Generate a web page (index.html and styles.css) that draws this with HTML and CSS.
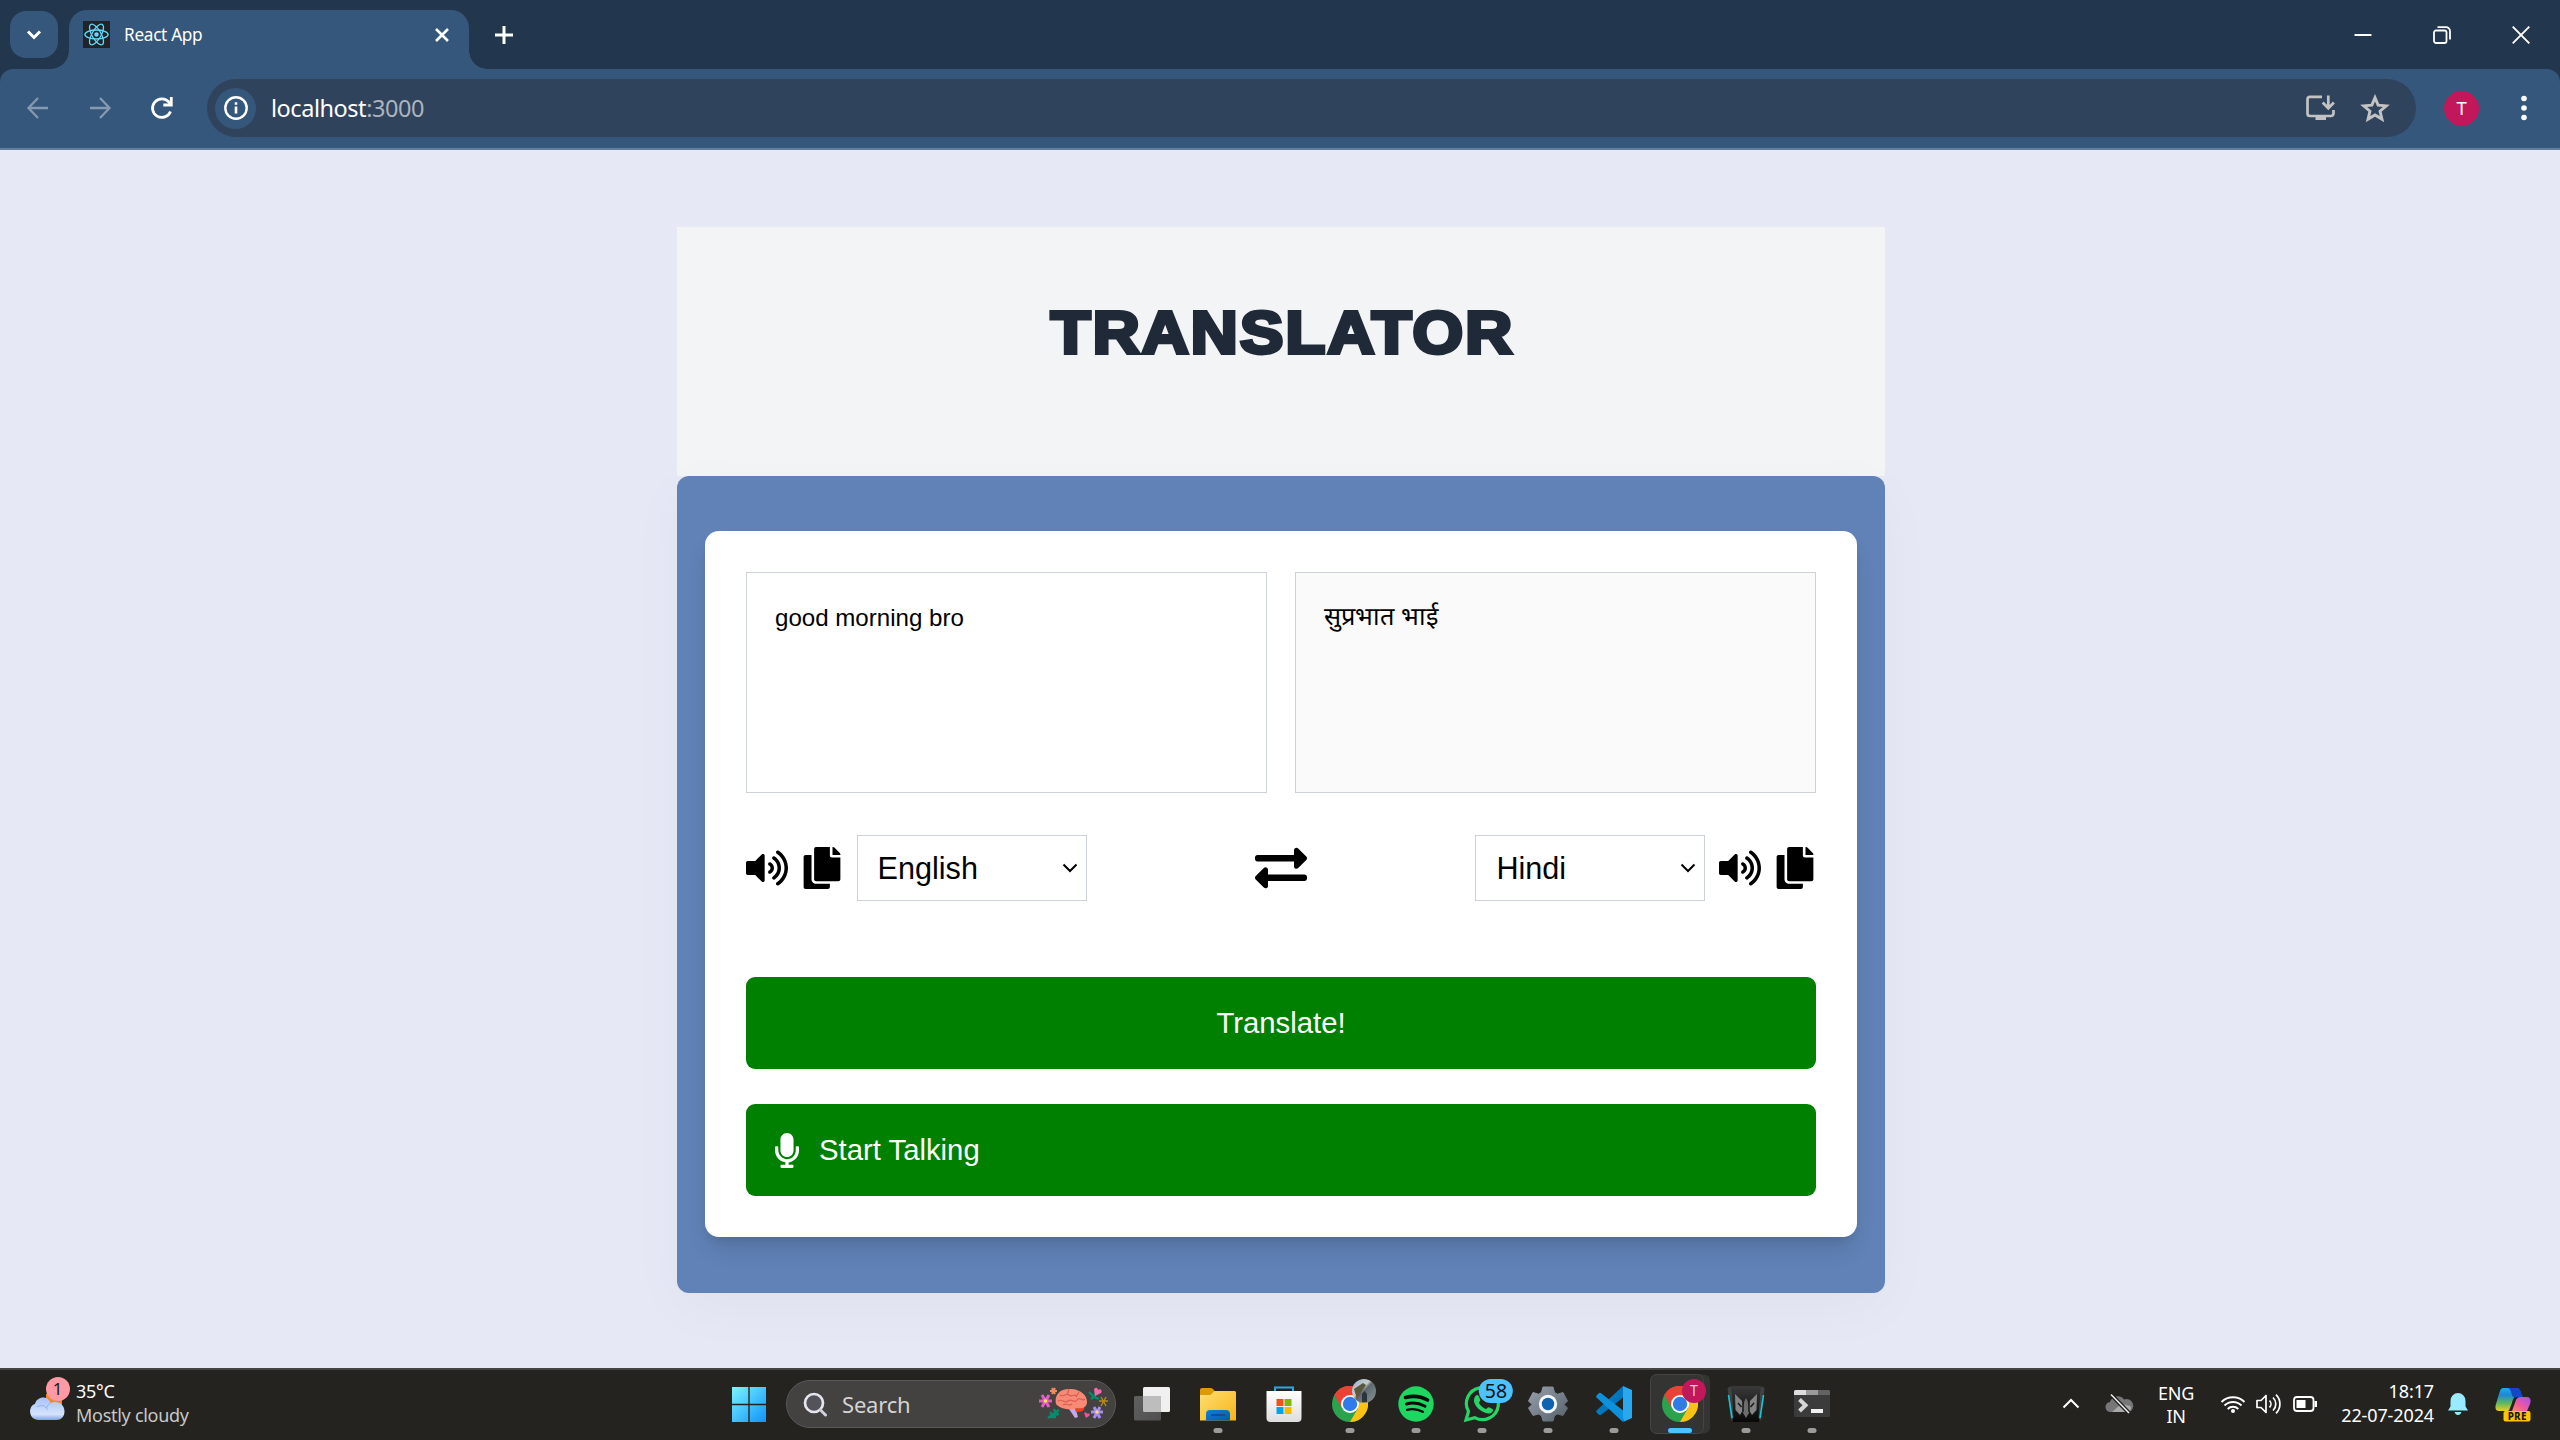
FILE: index.html
```html
<!DOCTYPE html>
<html lang="en">
<head>
<meta charset="utf-8">
<title>React App</title>
<link rel="stylesheet" href="styles.css">
</head>
<body>
<svg class="defs" width="0" height="0">
  <defs>
    <linearGradient id="gWin" x1="0" y1="0" x2="1" y2="1"><stop offset="0" stop-color="#7df3ff"/><stop offset="1" stop-color="#0d93fb"/></linearGradient>
    <linearGradient id="gViewB" x1="0" y1="0" x2="1" y2="1"><stop offset="0" stop-color="#606060"/><stop offset="1" stop-color="#505050"/></linearGradient>
    <linearGradient id="gFold" x1="0" y1="0" x2="1" y2="1"><stop offset="0" stop-color="#ffdf71"/><stop offset="1" stop-color="#f6b31a"/></linearGradient>
    <linearGradient id="gBlue" x1="0" y1="0" x2="1" y2="1"><stop offset="0" stop-color="#1280d4"/><stop offset="1" stop-color="#0a58a8"/></linearGradient>
    <linearGradient id="gBag" x1="0" y1="0" x2="0" y2="1"><stop offset="0" stop-color="#ffffff"/><stop offset="1" stop-color="#dedede"/></linearGradient>
    <linearGradient id="gGear" x1="0" y1="0" x2="1" y2="1"><stop offset="0" stop-color="#99a1aa"/><stop offset="1" stop-color="#56616d"/></linearGradient>
    <linearGradient id="gCloud" x1="0" y1="0" x2="0" y2="1"><stop offset="0" stop-color="#a6c2fb"/><stop offset=".75" stop-color="#d6e3fb"/><stop offset="1" stop-color="#7fa4ec"/></linearGradient>
    <linearGradient id="gCopA" x1="0" y1="0" x2="0" y2="1"><stop offset="0" stop-color="#18b0ec"/><stop offset=".3" stop-color="#1f86d8"/><stop offset=".65" stop-color="#5cb860"/><stop offset="1" stop-color="#f2cd1e"/></linearGradient>
    <linearGradient id="gCopB" x1="1" y1="0" x2="0" y2="1"><stop offset="0" stop-color="#a44df2"/><stop offset=".6" stop-color="#ee5c9c"/><stop offset="1" stop-color="#ff8a5c"/></linearGradient>
    <linearGradient id="gPhoto" x1="0" y1="0" x2="1" y2="1"><stop offset="0" stop-color="#8fb0d0"/><stop offset=".4" stop-color="#c9cdc8"/><stop offset=".5" stop-color="#5d6a70"/><stop offset="1" stop-color="#8b9692"/></linearGradient>
    <linearGradient id="gBlack" x1="0" y1="0" x2="0" y2="1"><stop offset="0" stop-color="#393939"/><stop offset="1" stop-color="#080808"/></linearGradient>
    <symbol id="volume" viewBox="0 0 576 512"><path d="M215.03 71.05L126.06 160H24c-13.26 0-24 10.74-24 24v144c0 13.25 10.74 24 24 24h102.06l88.97 88.95c15.03 15.03 40.97 4.47 40.97-16.97V88.02c0-21.46-25.96-31.98-40.97-16.97zm233.32-51.08c-11.17-7.33-26.18-4.24-33.51 6.95-7.34 11.17-4.22 26.18 6.95 33.51 66.27 43.49 105.82 116.6 105.82 195.58 0 78.98-39.55 152.09-105.82 195.58-11.17 7.32-14.29 22.34-6.95 33.5 7.04 10.71 21.93 14.56 33.51 6.95C528.27 439.58 576 351.33 576 256S528.27 72.43 448.35 19.97zM480 256c0-63.53-32.06-121.94-85.77-156.24-11.19-7.14-26.03-3.82-33.12 7.46s-3.78 26.21 7.41 33.36C408.27 165.97 432 209.11 432 256s-23.73 90.02-63.48 115.42c-11.19 7.14-14.5 22.07-7.41 33.36 6.51 10.36 21.12 15.14 33.12 7.46C447.94 377.94 480 319.54 480 256zm-141.77-76.87c-11.58-6.33-26.19-2.16-32.61 9.45-6.39 11.61-2.16 26.2 9.45 32.61C327.98 228.28 336 241.63 336 256c0 14.38-8.02 27.72-20.92 34.81-11.61 6.41-15.84 21-9.45 32.61 6.43 11.66 21.05 15.8 32.61 9.45 28.23-15.55 45.77-45 45.77-76.88s-17.54-61.32-45.78-76.86z"/></symbol>
    <symbol id="copy" viewBox="0 0 448 512"><path d="M320 448v40c0 13.255-10.745 24-24 24H24c-13.255 0-24-10.745-24-24V120c0-13.255 10.745-24 24-24h72v296c0 30.879 25.121 56 56 56h168zm0-344V0H152c-13.255 0-24 10.745-24 24v368c0 13.255 10.745 24 24 24h272c13.255 0 24-10.745 24-24V128H344c-13.2 0-24-10.8-24-24zm120.971-31.029L375.029 7.029A24 24 0 0 0 358.059 0H352v96h96v-6.059a24 24 0 0 0-7.029-16.97z"/></symbol>
    <symbol id="chrome" viewBox="0 0 36 36">
      <circle cx="18" cy="18" r="18" fill="#2ba24c"/>
      <path d="M2.4 9A18 18 0 0 1 33.6 9H18z" fill="#ea4335"/>
      <path d="M2.4 9A18 18 0 0 1 18 0V9L10.2 22.5z" fill="#ea4335"/>
      <path d="M33.6 9A18 18 0 0 1 18 36L25.8 22.5 18 9z" fill="#fbc116"/>
      <circle cx="18" cy="18" r="9" fill="#fff"/><circle cx="18" cy="18" r="7.2" fill="#2f7bea"/>
    </symbol>
  </defs>
</svg>

<div class="screen">
  <header class="tabstrip">
    <div class="tab-search"><svg width="16" height="12" viewBox="0 0 16 12"><path d="M2 2.5l6 6 6-6" fill="none" stroke="#fff" stroke-width="3"/></svg></div>
    <div class="tab">
      <svg class="favicon" viewBox="0 0 27 27"><rect width="27" height="27" fill="#20232a"/><g fill="none" stroke="#61dafb" stroke-width="1.3"><ellipse cx="13.5" cy="13.5" rx="11.6" ry="4.5"/><ellipse cx="13.5" cy="13.5" rx="11.6" ry="4.5" transform="rotate(60 13.5 13.5)"/><ellipse cx="13.5" cy="13.5" rx="11.6" ry="4.5" transform="rotate(120 13.5 13.5)"/></g><circle cx="13.5" cy="13.5" r="2.2" fill="#61dafb"/></svg>
      <span class="tab-title">React App</span>
      <svg class="tab-close" width="14" height="14" viewBox="0 0 14 14"><path d="M1 1l12 12M13 1L1 13" stroke="#fff" stroke-width="2.6"/></svg>
    </div>
    <svg class="new-tab" width="18" height="18" viewBox="0 0 18 18"><path d="M9 0v18M0 9h18" stroke="#fff" stroke-width="3"/></svg>
    <div class="window-buttons">
      <svg width="18" height="18" viewBox="0 0 18 18"><path d="M0.5 9h17" stroke="#fff" stroke-width="2"/></svg>
      <svg width="18" height="18" viewBox="0 0 18 18" fill="none" stroke="#fff" stroke-width="1.8"><rect x="1" y="4.5" width="12.5" height="12.5" rx="2"/><path d="M4.5 1.2H13a4 4 0 0 1 4 4v8.2"/></svg>
      <svg width="18" height="18" viewBox="0 0 18 18"><path d="M.7.7l16.6 16.6M17.3.7L.7 17.3" stroke="#fff" stroke-width="1.9"/></svg>
    </div>
  </header>

  <div class="toolbar">
    <svg class="nav-icon dim" viewBox="0 0 24 24"><path d="M22 12H3M12 2L2.500 12 12 22"/></svg>
    <svg class="nav-icon dim" viewBox="0 0 24 24"><path d="M2 12h19M12 2l9.500 10L12 22"/></svg>
    <svg class="nav-icon reload" viewBox="0 0 24 24"><path d="M20.500 15.500A9.300 9.300 0 1 1 19 6.200L21 8.600M21.300 1v8h-8"/></svg>
    <div class="omnibox">
      <span class="site-info"><svg width="26" height="26" viewBox="0 0 26 26"><circle cx="13" cy="13" r="10.700" fill="none" stroke="#fff" stroke-width="2.400"/><path d="M13 11.500v7M13 7.200v2.500" stroke="#fff" stroke-width="2.600"/></svg></span>
      <span class="url">localhost<span class="port">:3000</span></span>
      <svg class="install" width="30" height="28" viewBox="0 0 30 28" fill="none" stroke="#c3c3c3" stroke-width="2.700"><path d="M17 2.800H5a2.500 2.500 0 0 0-2.500 2.500v14.200A2.500 2.500 0 0 0 5 22h21a2.500 2.500 0 0 0 2.500-2.500V16M23.300 1.500V13M17.700 8.500l5.600 5.700 5.600-5.700"/><path d="M10.500 22h10.500v4H10.500z" fill="#c3c3c3" stroke="none"/></svg>
      <svg class="star" width="30" height="29" viewBox="0 0 28 27"><path d="M14 3.400l2.900 7 7.600.6-5.800 5 1.800 7.400-6.500-3.900-6.500 3.900 1.800-7.400-5.800-5 7.600-.6z" fill="none" stroke="#c3c3c3" stroke-width="2.700"/></svg>
    </div>
    <span class="avatar">T</span>
    <svg class="menu-dots" width="6" height="26" viewBox="0 0 6 26" fill="#fff"><circle cx="3" cy="3.500" r="2.800"/><circle cx="3" cy="13" r="2.800"/><circle cx="3" cy="22.500" r="2.800"/></svg>
  </div>

  <main class="page">
    <div class="banner"><h1 class="title">TRANSLATOR</h1></div>
    <section class="panel">
      <div class="card">
        <div class="texts">
          <textarea class="text" spellcheck="false">good morning bro</textarea>
          <textarea class="text result" lang="hi" readonly>सुप्रभात भाई</textarea>
        </div>
        <div class="controls">
          <div class="group">
            <svg class="icon"><use href="#volume"/></svg>
            <svg class="icon"><use href="#copy"/></svg>
            <div class="select">English<svg width="16" height="10" viewBox="0 0 16 10"><path d="M1.500 1.500L8 8l6.500-6.500" fill="none" stroke="#000" stroke-width="2"/></svg></div>
          </div>
          <svg class="swap" viewBox="0 0 512 512"><path d="M0 168v-16c0-13.255 10.745-24 24-24h360V80c0-21.367 25.899-32.042 40.971-16.971l80 80c9.372 9.373 9.372 24.569 0 33.941l-80 80C409.956 271.982 384 261.456 384 240v-48H24c-13.255 0-24-10.745-24-24zm488 152H128v-48c0-21.314-25.862-32.080-40.971-16.971l-80 80c-9.372 9.373-9.372 24.569 0 33.941l80 80C102.057 463.997 128 453.437 128 432v-48h360c13.255 0 24-10.745 24-24v-16c0-13.255-10.745-24-24-24z"/></svg>
          <div class="group">
            <div class="select">Hindi<svg width="16" height="10" viewBox="0 0 16 10"><path d="M1.500 1.500L8 8l6.500-6.500" fill="none" stroke="#000" stroke-width="2"/></svg></div>
            <svg class="icon"><use href="#volume"/></svg>
            <svg class="icon"><use href="#copy"/></svg>
          </div>
        </div>
        <button class="btn">Translate!</button>
        <button class="btn talk"><svg width="24" height="35" viewBox="0 0 352 512" fill="#fff"><path d="M176 352c53.020 0 96-42.980 96-96V96c0-53.020-42.980-96-96-96S80 42.980 80 96v160c0 53.020 42.980 96 96 96zm160-160h-16c-8.840 0-16 7.160-16 16v48c0 74.800-64.490 134.820-140.790 127.380C96.710 376.890 48 317.110 48 250.300V208c0-8.840-7.160-16-16-16H16c-8.840 0-16 7.160-16 16v40.160c0 89.640 63.970 169.550 152 181.690V464H96c-8.840 0-16 7.160-16 16v16c0 8.840 7.160 16 16 16h160c8.840 0 16-7.160 16-16v-16c0-8.840-7.160-16-16-16h-56v-33.770C285.710 418.470 352 344.900 352 256v-48c0-8.840-7.160-16-16-16z"/></svg>Start Talking</button>
      </div>
    </section>
  </main>

  <footer class="taskbar">
    <div class="weather">
      <div class="weather-icon">
        <svg width="38" height="30" viewBox="0 0 38 30"><path d="M18 2h16v12H18z" fill="#f58a1c"/><path d="M10 28a8.500 8.500 0 0 1-3-16.200C9 4 20 3 22.500 11c8-3 14 2 14 8.500 0 5-3.500 8.500-8 8.500z" fill="url(#gCloud)"/><path d="M9 15c5-3 9-1 10.500 3M22.500 11c-2 1-3.500 3-4 5" fill="none" stroke="#8fb0f2" stroke-width="1"/></svg>
        <span class="badge">1</span>
      </div>
      <div class="two-line"><span>35°C</span><span class="muted">Mostly cloudy</span></div>
    </div>

    <svg class="app" viewBox="0 0 66 72"><path d="M16 19h16.300v16.800H16z M33.700 19H50v16.800H33.700z M16 37.200h16.300V54H16z M33.700 37.200H50V54H33.700z" fill="url(#gWin)"/></svg>

    <div class="search">
      <svg width="24" height="25" viewBox="0 0 24 25"><circle cx="11" cy="11" r="9" fill="#55535a" stroke="#e6e6ee" stroke-width="2.700"/><path d="M17.500 18l5 5" stroke="#d0d0dc" stroke-width="3" stroke-linecap="round"/></svg>
      <span class="search-label">Search</span>
      <svg class="doodle" width="72" height="34" viewBox="0 0 72 34">
        <path d="M31 22l6 9 3-1-3-10z" fill="#c0abf0"/>
        <path d="M36 20h10q2 5-8 5z" fill="#ef3d20"/>
        <path d="M18 17C16 8 22 2 31 2c10-1 19 6 18 14-1 5-6 6-10 5-6 3-17 1-21-4z" fill="#f68a75"/>
        <path d="M22 8c4 3 6-3 9 0s5-2 8 1m-19 5c4-3 6 3 10 0s6 3 9-1 5 2 8-1M25 18c3-3 6 2 9-1m-3-15l-2 6m9 2l3-5" fill="none" stroke="#d95f51" stroke-width="1.200"/>
        <g stroke="#e45fc4" stroke-width="3"><path d="M1 14h13M4 8l7 12M11 8L4 20"/></g><circle cx="7.500" cy="14" r="1.800" fill="#ffe14e"/>
        <g stroke="#f08a60" stroke-width="2"><path d="M12 4h7M14 1l3 6M17 1l-3 6"/></g>
        <path d="M10 31l11-8M12 25l3 4M16 22l2 5M21 27l-6 1M18 30l-5 0" stroke="#0a8a6b" stroke-width="2.300" fill="none"/>
        <path d="M51 5l5 5 5 2M53 12l4-3 1-5" stroke="#0a8a6b" stroke-width="2.200" fill="none"/>
        <path d="M56 2c3-3 4 0 4 1 2-2 5 0 3 3l-6 3z" fill="#f76aaf"/>
        <path d="M46 26c2-1 3 0 3 1 2-1 4 0 2 2l-3 2z" fill="#f0509c"/>
        <path d="M61 14h9M63 10l5 9M68 10l-5 9" stroke="#b98a16" stroke-width="1.400"/>
        <g stroke="#a78bf0" stroke-width="3"><path d="M53 25h12M56 20l6 11M62 20l-6 11"/></g><circle cx="59" cy="25" r="1.700" fill="#ffe14e"/>
      </svg>
    </div>

    <div class="apps">
      <svg class="app" viewBox="0 0 66 72"><rect x="24" y="19" width="27" height="25" rx="1.500" fill="#f0f0f0"/><rect x="15" y="28" width="27" height="24.500" rx="1.500" fill="url(#gViewB)"/><path d="M24 28h18v16H25.500a1.500 1.500 0 0 1-1.500-1.500z" fill="#bdbdbd"/></svg>
      <svg class="app" viewBox="0 0 66 72"><path d="M15 22a2 2 0 0 1 2-2h8.500q2 0 3 1.500l2 2.500-2 4H15z" fill="#dd9c05"/><path d="M15 27h10.500l4-4H49.500A1.500 1.500 0 0 1 51 24.500v28H15z" fill="url(#gFold)"/><path d="M21 52.600V46a4 4 0 0 1 4-4h16a4 4 0 0 1 4 4v6.600z" fill="url(#gBlue)"/><path d="M26 47h14" stroke="#084a86" stroke-width="1.500"/><rect class="run" x="28.500" y="60" width="9" height="5" rx="2.500"/></svg>
      <svg class="app" viewBox="0 0 66 72"><path d="M24 25v-5.500h18V25" fill="none" stroke="#2fa6e4" stroke-width="2"/><path d="M15.500 23h35v27a4 4 0 0 1-4 4h-27a4 4 0 0 1-4-4z" fill="url(#gBag)"/><path d="M25.500 31h7v7h-7z" fill="#f25022"/><path d="M33.500 31h7v7h-7z" fill="#7fba00"/><path d="M25.500 39h7v7h-7z" fill="#00a4ef"/><path d="M33.500 39h7v7h-7z" fill="#ffb900"/></svg>
      <svg class="app" viewBox="0 0 66 72"><use href="#chrome" x="15" y="18" width="36" height="36"/><circle cx="47" cy="23" r="12" fill="url(#gPhoto)"/><path d="M37 21l9-6 3 2-9 14z" fill="#5a5940"/><path d="M45 34v-8l2.500-3 2.500 3v8z" fill="#2b343c"/><rect class="run" x="28.500" y="60" width="9" height="5" rx="2.500"/></svg>
      <svg class="app" viewBox="0 0 66 72"><circle cx="33" cy="36" r="17.700" fill="#1ed760"/><g fill="none" stroke="#0b0b0b" stroke-linecap="round"><path d="M22.500 29.500c7.500-2 15.500-1.200 22 2.500" stroke-width="3.600"/><path d="M23.500 36c6.500-1.800 12.500-1 18.500 2.200" stroke-width="3"/><path d="M24 41.800c5.500-1.300 11-.7 15.800 2" stroke-width="2.400"/></g><rect class="run" x="28.500" y="60" width="9" height="5" rx="2.500"/></svg>
      <svg class="app" viewBox="0 0 66 72"><path d="M17 52l2.500-8.500a16 16 0 1 1 6.200 6.100z" fill="none" stroke="#28d467" stroke-width="3.200"/><path d="M26.500 28c1-1.500 2.600-1 3.200.3l1.600 3.500c.3 1.100-1.500 2.500-1.300 3.200 1.500 2.800 3.800 4.800 6.800 6 .9.200 2-2.300 3.200-1.800l3.500 1.800c1 .6.500 2.800-1 3.700-2.500 1.600-6 .8-10-1.600-4.200-2.600-7-6.500-7.500-9.600-.2-2.300.5-4.200 1.500-5.500z" fill="#28d467"/><rect x="29.800" y="11" width="34" height="24" rx="12" fill="#4cc2ff"/><text x="47" y="29.500" class="count" text-anchor="middle">58</text><rect class="run" x="28.500" y="60" width="9" height="5" rx="2.500"/></svg>
      <svg class="app" viewBox="0 0 66 72"><path d="M28 19h10l1.500 5.500 3 1.700 5.500-1.700 4.500 8.500-3.500 3.500 3.500 3.500-4.500 7.500-5.500-1.500-3 1.700L38 53H28l-1.500-5.300-3-1.700-5.500 1.500-4.500-7.500 3.500-3.500-3.500-3.500L18 24.500l5.500 1.700 3-1.700z" fill="url(#gGear)" stroke="url(#gGear)" stroke-width="1" stroke-linejoin="round"/><circle cx="33" cy="36" r="9.200" fill="#f4f6f8"/><circle cx="33" cy="36" r="6.200" fill="#0f62b0"/><rect class="run" x="28.500" y="60" width="9" height="5" rx="2.500"/></svg>
      <svg class="app" viewBox="0 0 66 72"><path d="M42 18L15.500 42.500a1.500 1.500 0 0 0 0 2l2.300 2.200a1.800 1.800 0 0 0 2.300 0L44 28z" fill="#0077bd"/><path d="M42 54L15.500 29.500a1.500 1.500 0 0 1 0-2l2.300-2.200a1.800 1.800 0 0 1 2.300 0L44 44z" fill="#0c92dc"/><path d="M42 18l9 4v28l-9 4q1-.5 0-4V22z" fill="#29a8f2"/><rect class="run" x="28.500" y="60" width="9" height="5" rx="2.500"/></svg>
      <svg class="app" viewBox="0 0 66 72"><path d="M50 6.500h7a6 6 0 0 1 6 6v47a6 6 0 0 1-6 6h-7z" fill="#343433"/><rect x="3.500" y="6.500" width="53" height="59" rx="6" fill="#343433" stroke="#454544"/><use href="#chrome" x="15" y="18" width="36" height="36"/><circle cx="47" cy="23" r="12" fill="#c2185b"/><text x="47" y="28" class="mini" text-anchor="middle">T</text><rect x="21" y="60" width="24" height="5" rx="2.500" fill="#4cc2ff"/></svg>
      <svg class="app" viewBox="0 0 66 72"><path d="M19 18h28l-1 36H20z" fill="url(#gBlack)"/><path d="M14.500 20l4-2 2 32-2.500 3zM51.500 20l-4-2-2 32 2.500 3z" fill="#3f4245"/><path d="M15.500 27l3.500 23M50.500 27L47 50" stroke="#14c8d8" stroke-width="1.600"/><path d="M22 26l8 8v8l-3 5-4.500-5zM44 26l-8 8v8l3 5 4.500-5z" fill="#858585"/><path d="M31.500 33l1.500-3 1.500 3 2.500 10-4 7-4-7z" fill="#6d6d6d"/><path d="M25 35l3.500 4M41 35l-3.500 4M30 33v11M36 33v11" stroke="#191919" stroke-width="1.500"/><rect class="run" x="28.500" y="60" width="9" height="5" rx="2.500"/></svg>
      <svg class="app" viewBox="0 0 66 72"><rect x="15" y="22" width="36" height="27" rx="1.500" fill="#3b3b3b"/><path d="M15 27v-3.500a1.500 1.500 0 0 1 1.500-1.500H27v5z" fill="#ddd"/><path d="M27 22h12v5H27z" fill="#9b9b9b"/><path d="M39 22h10.500a1.500 1.500 0 0 1 1.500 1.500V27H39z" fill="#636363"/><path d="M20.500 31.500l6 5.700-6 5.800" fill="none" stroke="#d5d5d5" stroke-width="4"/><path d="M32 41h12v4H32z" fill="#f0f0f0"/><rect class="run" x="28.500" y="60" width="9" height="5" rx="2.500"/></svg>
    </div>

    <div class="tray">
      <svg width="36" height="24" viewBox="0 0 36 24"><path d="M10.500 15.500l7.500-7.500 7.500 7.500" fill="none" stroke="#fff" stroke-width="2"/></svg>
      <svg width="60" height="24" viewBox="0 0 60 24"><path d="M22 20a5 5 0 0 1-1-10 8 8 0 0 1 14-2.500 6.500 6.500 0 0 1 5 12.500z" fill="#77777a"/><path d="M23 20l9-8 9.500 2c1.500 4-1.500 6-4 6z" fill="#a9a9a9"/><path d="M22 2.500l18 18.500" stroke="#242320" stroke-width="4"/><path d="M22 2.500l18 18.500" stroke="#f0f0f0" stroke-width="1.500"/></svg>
      <div class="two-line lang"><span>ENG</span><span>IN</span></div>
      <svg class="wifi" width="36" height="24" viewBox="0 0 36 24" fill="none" stroke="#fff" stroke-width="1.900"><path d="M6.500 10a16.300 16.300 0 0 1 23 0M9.500 13.500a12 12 0 0 1 17 0M12.700 17a7.500 7.500 0 0 1 10.600 0"/><circle cx="18" cy="19" r="2" fill="#fff" stroke="none"/></svg>
      <svg width="36" height="24" viewBox="0 0 36 24" fill="none" stroke="#fff" stroke-width="1.700"><path d="M6 8.500h4l5-5v17l-5-5H6z" stroke-linejoin="round"/><path d="M18.500 8.500a5 5 0 0 1 0 7M22 5.500a9 9 0 0 1 0 13M25 2.700a13 13 0 0 1 0 18.600"/></svg>
      <svg width="36" height="24" viewBox="0 0 36 24"><rect x="7" y="5" width="19.500" height="14" rx="3" fill="none" stroke="#fff" stroke-width="1.800"/><rect x="9.500" y="8" width="9" height="8" fill="#fff"/><path d="M27.500 9h2.500v6h-2.500z" fill="#fff"/></svg>
      <div class="two-line clock"><span>18:17</span><span>22-07-2024</span></div>
      <svg width="48" height="24" viewBox="0 0 48 24" fill="#99ebff"><path d="M16.500 9a7.500 8 0 0 1 15 0v5.500l2.500 4H14l2.500-4zM20.500 20h7q-1 3-3.500 3t-3.500-3z"/></svg>
      <svg width="62" height="36" viewBox="0 0 62 36"><path d="M21 2h13c3 0 4 2 5 5l-4 3c-3 0-4 3-5 7l-2 5c-1 4-3 3-5 3h-6c-4 0-4-4-3-7l3-10c1-4 2-6 4-6z" fill="url(#gCopA)"/><path d="M30 2h5c3 0 4 5 6 9h-9c-3 0-2-8-6-9z" fill="#1746c4"/><path d="M39 11h6c4 0 4 4 3 7l-3 7H30l4-11c1-2 2-3 5-3z" fill="url(#gCopB)"/><rect x="21.500" y="25" width="27" height="10.500" rx="2" fill="#ffc400"/><text x="35.200" y="33.700" class="pre" text-anchor="middle">PRE</text></svg>
    </div>
  </footer>
</div>
</body>
</html>
```
FILE: styles.css
```css
* { box-sizing: border-box; }
body { margin: 0; overflow: hidden; background: #e6e8f6; }
.defs { position: absolute; }
svg { display: block; flex: none; }

.screen {
  display: flex;
  flex-direction: column;
  width: 2560px;
  height: 1440px;
  font-family: "Noto Sans", "Open Sans", sans-serif;
}

/* Browser tab strip */
.tabstrip {
  display: flex;
  align-items: center;
  height: 69px;
  padding: 0 30px 0 10px;
  background: #22364d;
}
.tab-search {
  display: grid;
  place-items: center;
  width: 48px;
  height: 47px;
  border-radius: 16px;
  background: #35577b;
}
.tab {
  position: relative;
  display: flex;
  align-items: center;
  align-self: flex-end;
  width: 400px;
  height: 59px;
  margin-left: 11px;
  padding: 0 20px 10px 14px;
  border-radius: 18px 18px 0 0;
  background: #35577b;
}
.tab::before, .tab::after {
  content: "";
  position: absolute;
  bottom: 0;
  width: 18px;
  height: 18px;
}
.tab::before { left: -18px; background: radial-gradient(circle at 0 0, transparent 17.5px, #35577b 18px); }
.tab::after { right: -18px; background: radial-gradient(circle at 100% 0, transparent 17.5px, #35577b 18px); }
.favicon { width: 27px; height: 27px; }
.tab-title { margin-left: 14px; color: #fff; font-size: 17.2px; letter-spacing: -0.3px; white-space: nowrap; }
.tab-close { margin-left: auto; }
.new-tab { margin-left: 26px; }
.window-buttons { display: flex; gap: 61px; margin-left: auto; }

/* Browser toolbar */
.toolbar {
  position: relative;
  isolation: isolate;
  display: flex;
  align-items: center;
  height: 81px;
  padding: 0 33px 1px 26px;
  border-bottom: 2px solid #667e9d;
}
.toolbar::before {
  content: "";
  position: absolute;
  inset: 0;
  z-index: -1;
  border-radius: 13px 13px 0 0;
  background: #35577b;
  box-shadow: 0 0 0 20px #22364d;
  clip-path: inset(0);
}
.nav-icon { width: 24px; height: 24px; margin-right: 38px; fill: none; stroke: #fff; stroke-width: 2.8; }
.dim { stroke: #8599b0; stroke-width: 2.3; }
.reload { margin-right: 33px; }
.omnibox {
  display: flex;
  align-items: center;
  width: 2209px;
  height: 58px;
  padding: 0 26px 0 8px;
  border-radius: 29px;
  background: #30435d;
}
.site-info { display: grid; place-items: center; width: 41px; height: 41px; border-radius: 50%; background: #35577b; }
.url { margin-left: 15px; color: #fff; font-size: 23.5px; line-height: 32px; letter-spacing: -0.46px; }
.port { color: #acb4be; }
.install { margin-left: auto; }
.star { margin-left: 25px; }
.avatar {
  width: 35px;
  height: 35px;
  margin-left: 28px;
  border-radius: 50%;
  background: #c2185b;
  color: #fff;
  font: 18px/35px Roboto, sans-serif;
  text-align: center;
}
.menu-dots { margin-left: 42px; }

/* Translator page */
.page {
  flex: 1;
  width: 1208px;
  margin-left: 677px;
  padding-top: 77px;
  font-family: "Liberation Sans", Arial, sans-serif;
}
.banner { height: 249px; padding: 72px 0 0 3px; background: #f3f4f6; text-align: center; }
.title {
  margin: 0;
  color: #1f2937;
  font-size: 58.5px;
  line-height: 68px;
  font-weight: 700;
  letter-spacing: 2px;
  transform: scaleX(1.11);
  -webkit-text-stroke: 3.8px #1f2937;
}
.panel {
  height: 817px;
  padding: 55px 28px 56px;
  border-radius: 12px;
  background: #6082b6;
  box-shadow: 0 15px 60px rgba(0, 0, 0, 0.03);
}
.card {
  height: 706px;
  padding: 41px;
  border-radius: 14px;
  background: #fff;
  box-shadow: 0 15px 23px -4px rgba(0, 0, 0, 0.12), 0 6px 9px -4px rgba(0, 0, 0, 0.1);
}
.texts { display: grid; grid-template-columns: 1fr 1fr; gap: 28px; }
.text {
  width: 100%;
  height: 221px;
  padding: 27px 28px;
  border: 1px solid #cdd1d8;
  outline: none;
  resize: none;
  background: #fff;
  color: #000;
  font: 24.1px/36px "Liberation Sans", Arial, sans-serif;
}
.result { padding-top: 25px; background: #fafafa; font-size: 25.3px; }
.controls {
  display: flex;
  align-items: center;
  justify-content: space-between;
  height: 66px;
  margin-top: 42px;
}
.group { display: flex; align-items: center; gap: 13.3px; }
.icon { width: 42px; height: 42px; }
.swap { width: 52px; height: 52px; }
.select {
  display: flex;
  align-items: center;
  justify-content: space-between;
  width: 230px;
  height: 66px;
  padding: 0 8px 0 20px;
  border: 1px solid #cdd1d8;
  background: #fff;
  font-size: 30.6px;
  line-height: 34px;
}
.btn {
  display: flex;
  align-items: center;
  justify-content: center;
  width: 100%;
  height: 92px;
  margin-top: 76px;
  padding: 0 29px;
  border: 0;
  border-radius: 9px;
  background: #008000;
  color: #fff;
  font: 29.3px "Liberation Sans", Arial, sans-serif;
}
.talk { justify-content: flex-start; gap: 20px; margin-top: 35px; }

/* Windows taskbar */
.taskbar {
  display: flex;
  align-items: center;
  height: 72px;
  padding-right: 16px;
  background: #242320;
  box-shadow: inset 0 2px #454443;
  color: #fff;
  font-size: 18px;
}
.weather { display: flex; align-items: center; width: 716px; height: 72px; padding-left: 28px; }
.weather-icon { position: relative; width: 38px; padding-top: 6px; }
.badge {
  position: absolute;
  left: 17.5px;
  top: -9.5px;
  width: 24px;
  height: 24px;
  border-radius: 50%;
  background: #ff99a4;
  color: #1b1b1b;
  font-size: 17px;
  line-height: 24px;
  text-align: center;
}
.two-line { display: flex; flex-direction: column; margin-left: 10px; padding-bottom: 2px; line-height: 24px; letter-spacing: -0.28px; white-space: nowrap; }
.muted { color: #c8c8c7; }
.app { width: 66px; height: 72px; }
.apps { display: flex; margin-left: 3px; }
.search {
  display: flex;
  align-items: center;
  width: 330px;
  height: 48px;
  margin-left: 4px;
  padding: 0 5px 0 16px;
  border: 1.5px solid #5a5957;
  border-radius: 24px;
  background: #434240;
}
.search-label { margin-left: 15px; color: #d4d4d3; font-size: 22px; letter-spacing: -0.2px; }
.doodle { margin-left: auto; }
.run { fill: #9b9b9a; }
.count { font-size: 19.5px; fill: #111; }
.mini { font: 14px Roboto, sans-serif; fill: #f0c5d5; }
.pre { font-size: 9.8px; font-weight: 800; letter-spacing: 0.3px; fill: #1a1a1a; }
.tray { display: flex; align-items: center; margin-left: auto; }
.lang { width: 54px; margin-left: 0; padding: 2px 0 0; align-items: center; line-height: 23px; }
.wifi { margin-left: 12px; }
.clock { width: 111px; margin-left: 0; align-items: flex-end; letter-spacing: -0.12px; }
```
